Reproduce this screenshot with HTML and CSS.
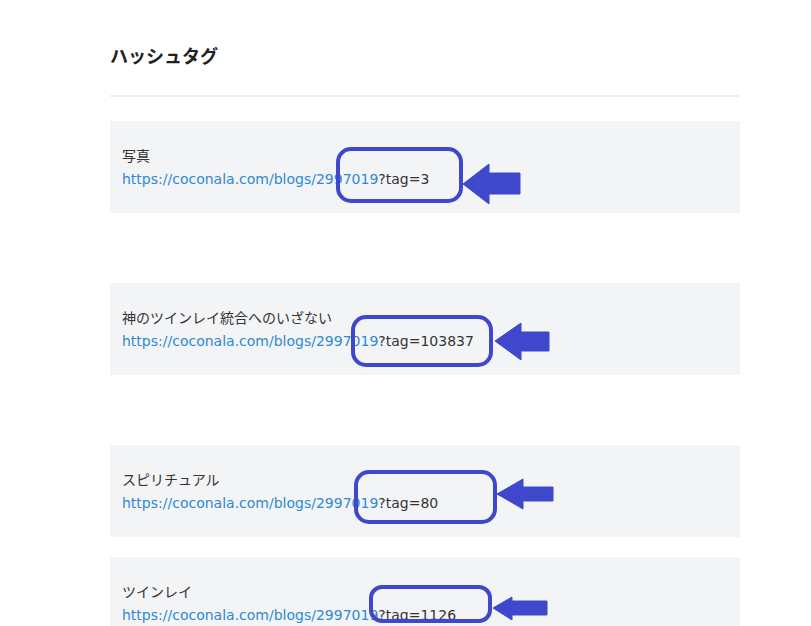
FILE: index.html
```html
<!DOCTYPE html>
<html lang="ja">
<head>
<meta charset="utf-8">
<title>ハッシュタグ</title>
<link rel="stylesheet" href="styles.css">
</head>
<body>
<main class="page">
  <h2 class="title">ハッシュタグ</h2>
  <hr class="divider">
  <ul class="tags">
    <li class="card">
      <div class="label">写真</div>
      <div class="url"><a class="link" href="#">https://coconala.com/blogs/2997019</a>?tag=3</div>
    </li>
    <li class="card gap-lg">
      <div class="label">神のツインレイ統合へのいざない</div>
      <div class="url"><a class="link" href="#">https://coconala.com/blogs/2997019</a>?tag=103837</div>
    </li>
    <li class="card gap-lg">
      <div class="label">スピリチュアル</div>
      <div class="url"><a class="link" href="#">https://coconala.com/blogs/2997019</a>?tag=80</div>
    </li>
    <li class="card gap-sm">
      <div class="label">ツインレイ</div>
      <div class="url"><a class="link" href="#">https://coconala.com/blogs/2997019</a>?tag=1126</div>
    </li>
  </ul>
</main>
<svg class="marks" width="811" height="626" viewBox="0 0 811 626" aria-hidden="true">
  <g class="mark-line">
    <rect x="338" y="149" width="123" height="52" rx="13"/>
    <rect x="353" y="317" width="138" height="48" rx="13"/>
    <rect x="356" y="472" width="139" height="50" rx="13"/>
    <rect x="371" y="587" width="119" height="34" rx="11"/>
  </g>
  <g class="mark-fill">
    <polygon points="463,184 489,164 489,173 520,173 520,194 489,194 489,204"/>
    <polygon points="495,341 521,323 521,332 549,332 549,351 521,351 521,360"/>
    <polygon points="497,494 523,479 523,487 553,487 553,501 523,501 523,509"/>
    <polygon points="493,608 512,597 512,601 547,601 547,615 512,615 512,620"/>
  </g>
</svg>
</body>
</html>
```

FILE: styles.css
```css
html, body {
  margin: 0;
  padding: 0;
  background: #ffffff;
}

body {
  font-family: "DejaVu Sans", "Noto Sans CJK JP", sans-serif;
  color: #333333;
  width: 811px;
  height: 626px;
  overflow: hidden;
  position: relative;
}

.page {
  width: 630px;
  margin-left: 110px;
  padding-top: 42px;
}

.title {
  margin: 0;
  font-family: "Noto Sans CJK JP", sans-serif;
  font-size: 18px;
  line-height: 26px;
  font-weight: 700;
  color: #222222;
}

.divider {
  margin: 27px 0 0 0;
  border: 0;
  height: 2px;
  background: #eff0f2;
}

.tags {
  list-style: none;
  margin: 24px 0 0 0;
  padding: 0;
}

.card {
  background: #f3f4f6;
  padding: 22px 12px;
  height: 48px;
}

.card.gap-lg {
  margin-top: 70px;
}

.card.gap-sm {
  margin-top: 20px;
}

.label {
  font-family: "Noto Sans CJK JP", sans-serif;
  font-size: 14px;
  line-height: 24px;
  color: #333333;
}

.url {
  font-size: 14px;
  line-height: 24px;
  white-space: nowrap;
  color: #333333;
}

.link {
  color: #3088d4;
  text-decoration: none;
}

.marks {
  position: absolute;
  left: 0;
  top: 0;
  pointer-events: none;
}

.mark-line rect {
  fill: none;
  stroke: #3f48cc;
  stroke-width: 4;
}

.mark-fill polygon {
  fill: #3f48cc;
  stroke: #3f48cc;
  stroke-width: 1;
  stroke-linejoin: round;
}
```
